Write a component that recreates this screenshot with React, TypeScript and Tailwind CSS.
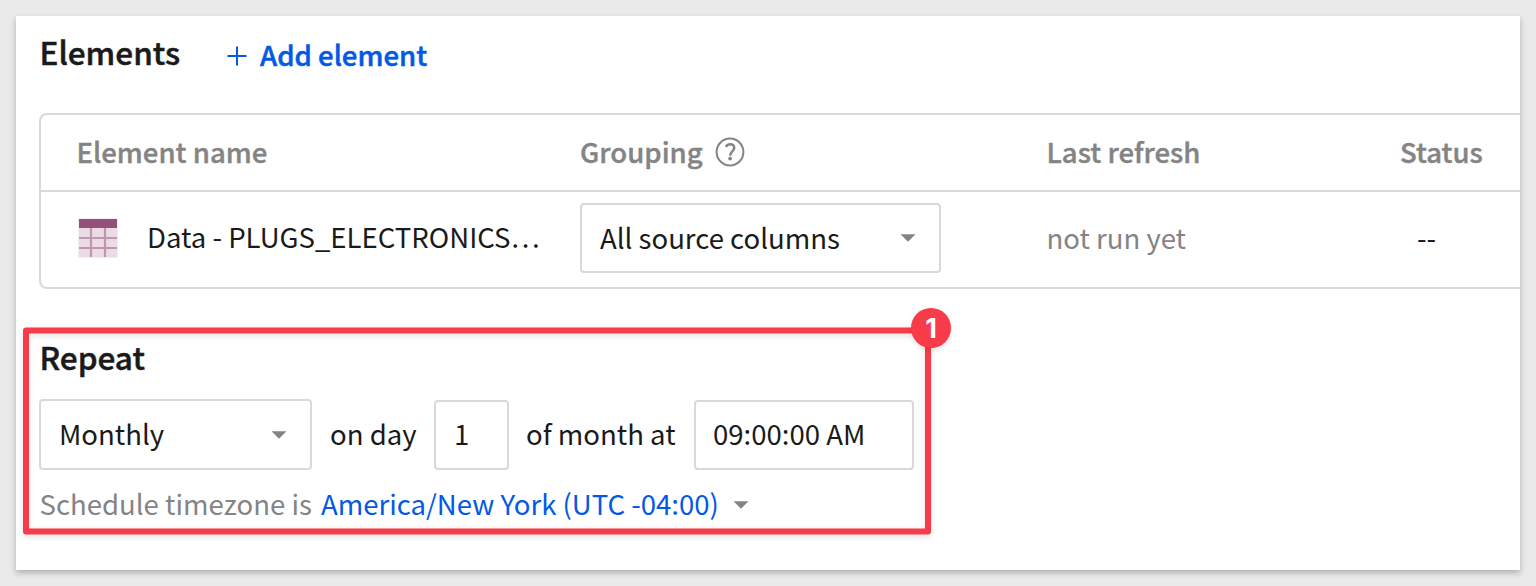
import type { ReactNode } from "react";

function Caret() {
  return (
    <svg width="16" height="8" viewBox="0 0 16 8" className="shrink-0 text-[#848484]">
      <path d="M0.5 0.2h15L8 7.8z" fill="currentColor" />
    </svg>
  );
}

function Field({ className, children }: { className: string; children: ReactNode }) {
  return (
    <div className={"flex items-center rounded-[4px] border-2 border-[#d9d9d9] bg-white " + className}>{children}</div>
  );
}

function HelpIcon() {
  return (
    <svg width="30" height="30" viewBox="0 0 30 30" fill="none" stroke="#848484" className="shrink-0">
      <circle cx="15" cy="15" r="13.4" strokeWidth="2" />
      <path d="M10.9 9.8C11.8 8.2 13.300 7.300 15.100 7.300c2.500 0 4.100 1.400 4.100 3.600 0 3.200-4.200 3.800-4 7.800" strokeWidth="2.5" />
      <circle cx="15.100" cy="21.600" r="1.900" fill="#848484" stroke="none" />
    </svg>
  );
}

function TableIcon() {
  return (
    <svg width="40" height="40" viewBox="0 0 40 40" className="shrink-0">
      <rect x="0.5" y="0.5" width="39" height="39" fill="#eadbe4" />
      <rect x="1" y="1" width="38" height="9" fill="#945079" />
      <path d="M13 10v29M27 10v29M1 20h38M1 30h38" stroke="#c196b1" strokeWidth="2.2" />
    </svg>
  );
}

function Highlight() {
  return (
    <div className="pointer-events-none absolute top-[292px] left-0">
      <svg width="950" height="250" viewBox="0 0 950 250" className="drop-shadow-[0_2px_3px_rgba(0,0,0,0.12)]">
        <rect x="10" y="22.5" width="902" height="201" fill="none" stroke="#f83b49" strokeWidth="6" strokeLinejoin="round" />
      </svg>
      <div className="absolute top-0 left-[895px] flex size-10 items-center justify-center rounded-full bg-[#f83b49] font-['Inter',sans-serif] text-[27px] leading-none font-bold text-white shadow-[0_2px_5px_rgba(0,0,0,0.12)]">
        1
      </div>
    </div>
  );
}

export default function App() {
  return (
    <div className="h-[586px] w-[1536px] overflow-hidden bg-[#eaeaea] p-4 font-['Noto_Sans_CJK_SC',sans-serif] text-[27.56px] leading-10 whitespace-nowrap text-[#1a1a1a]">
      <main className="relative h-[554px] bg-white pl-[23px] shadow-[0_3px_6px_rgba(0,0,0,0.25)]">
        <header className="flex h-[97px] items-start pt-[15px]">
          <h2 className="w-[188px] pl-[0.5px] text-[31.5px] leading-10 font-medium [-webkit-text-stroke:0.5px]">Elements</h2>
          <button className="flex items-center gap-[13px] pt-[3px] font-medium text-[#0459e4] [-webkit-text-stroke:0.5px]">
            <svg width="20" height="20" viewBox="0 0 20 20" stroke="currentColor" strokeWidth="2" className="mt-1">
              <path d="M10 0.500v19M0.500 10h19" />
            </svg>
            Add element
          </button>
        </header>

        <section className="h-[176px] rounded-l-[8px] border-2 border-r-0 border-[#d9d9d9]">
          <div className="grid h-[77px] grid-cols-[539px_467px_353px_1fr] items-center border-b-2 border-[#d9d9d9] pb-1 font-medium text-[#848484] [-webkit-text-stroke:0.4px]">
            <div className="pl-[35.5px]">Element name</div>
            <div className="flex items-center gap-3">
              Grouping
              <span className="pt-[2px]">
                <HelpIcon />
              </span>
            </div>
            <div className="-ml-[0.5px]">Last refresh</div>
            <div>Status</div>
          </div>
          <div className="grid h-[95px] grid-cols-[539px_467px_353px_1fr] items-center pb-1">
            <div className="flex items-center gap-[29px] pl-[37px]">
              <TableIcon />
              <span className="pb-1">Data - PLUGS_ELECTRONICS…</span>
            </div>
            <Field className="h-[70px] w-[361px] justify-between pr-[23px] pl-[18px]">
              <span className="pb-[2px]">All source columns</span>
              <Caret />
            </Field>
            <div className="-ml-[0.5px] pb-[2px] text-[#848484]">not run yet</div>
            <div className="pb-[2px] pl-[17px]">--</div>
          </div>
        </section>

        <section className="pt-[47px]">
          <h2 className="pl-[0.5px] text-[31.5px] leading-10 font-medium [-webkit-text-stroke:0.5px]">Repeat</h2>
          <div className="mt-[23px] flex h-[71px] items-end">
            <Field className="h-[71px] w-[273px] justify-between pr-[23px] pl-[18px]">
              <span className="pb-[3px]">Monthly</span>
              <Caret />
            </Field>
            <span className="flex h-[70px] w-[122px] items-center pb-1 pl-[18px]">on day</span>
            <Field className="h-[70px] w-[75px] pb-1 pl-[18px]">1</Field>
            <span className="flex h-[70px] w-[185px] items-center pb-1 pl-[17px]">of month at</span>
            <Field className="h-[70px] w-[220px] pb-1 pl-[17px]">09:00:00 AM</Field>
          </div>
          <div className="mt-[13px] flex items-center text-[#848484]">
            <span className="w-[282px] pl-[0.5px]">Schedule timezone is</span>
            <span className="w-[412px] text-[#0459e4]">America/New York (UTC -04:00)</span>
            <span className="pt-[3px]">
              <Caret />
            </span>
          </div>
        </section>
        <Highlight />
      </main>
    </div>
  );
}
